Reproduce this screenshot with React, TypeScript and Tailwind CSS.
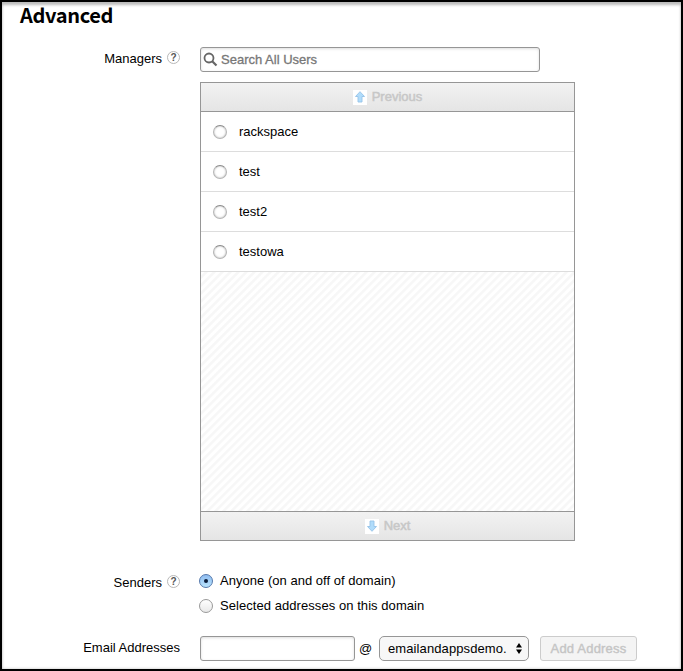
import React from 'react';

function HelpIcon() {
  return (
    <span className="mb-[3px] flex h-[13px] w-[13px] shrink-0 items-center justify-center rounded-full border border-[#b8b8b8] bg-white text-[10px] font-bold leading-none text-[#555]">
      ?
    </span>
  );
}

function Radio({ checked = false, muted = false }: { checked?: boolean; muted?: boolean }) {
  if (checked) {
    return (
      <span className="flex h-[14px] w-[14px] shrink-0 items-center justify-center rounded-full border border-[#5478ac] bg-linear-to-b from-[#8fbcf0] to-[#b9e4fd]">
        <span className="h-1 w-1 rounded-full bg-[#0a1c3a]" />
      </span>
    );
  }
  return (
    <span
      className={`h-[14px] w-[14px] shrink-0 rounded-full border ${
        muted
          ? 'border-[#999] bg-linear-to-b from-white to-[#e9e9e9]'
          : 'border-[#b5b5b5] border-t-[#8a8a8a] bg-white shadow-[inset_0_0_2px_#aaa]'
      }`}
    />
  );
}

function Arrow({ down = false }: { down?: boolean }) {
  return (
    <span className="flex h-[15px] w-[14px] items-center justify-center bg-white">
      <svg width="10" height="12" viewBox="0 0 10 12" className={down ? 'rotate-180' : ''}>
        <path d="M5 .7 9.5 5.5H7V11H3V5.5H.5Z" fill="#b0dcfb" stroke="#96c3e8" strokeWidth=".9" />
      </svg>
    </span>
  );
}

const users = ['rackspace', 'test', 'test2', 'testowa'];
const bar =
  'flex h-[28px] shrink-0 items-center justify-center gap-[5px] bg-linear-to-b from-[#f2f2f2] to-[#e5e5e5] text-[13px] text-[#c7c7c7] [-webkit-text-stroke:0.5px_#c7c7c7]';
const field =
  'h-[25px] rounded-[3px] border border-[#969696] bg-white shadow-[inset_0_1px_3px_#ddd]';

export default function App() {
  return (
    <main className="h-[671px] w-[683px] overflow-hidden border-2 border-black bg-white font-['Liberation_Sans',Arial,sans-serif] text-[13px] leading-4 text-black shadow-[inset_0_4px_3px_-1px_#bbb,inset_0_0_3px_#bbb]">
      <h1 className="h-[45px] pl-[18px] font-['Noto_Sans_CJK_SC',sans-serif] text-[20px] leading-[25px] font-bold tracking-[-0.35px]">
        Advanced
      </h1>

      <section className="flex h-[518px]">
        <div className="mt-[4px] flex h-4 w-[178px] items-center justify-end gap-[5px]">
          <span>Managers</span>
          <HelpIcon />
        </div>
        <div className="ml-[20px] w-[375px]">
          <div className={`${field} flex w-[340px] items-center pl-[2px] text-[#777] [-webkit-text-stroke:0.3px_#777]`}>
            <svg width="15" height="15" viewBox="0 0 15 15" fill="none" stroke="#666" className="mr-[3px]">
              <circle cx="6" cy="6" r="4.5" strokeWidth="1.8" />
              <path d="m9 9 4.5 4.5" strokeWidth="2.2" />
            </svg>
            <span>Search All Users</span>
          </div>
          <div className="mt-[10px] flex h-[459px] flex-col border border-[#969696]">
            <div className={bar}>
              <Arrow />
              <span>Previous</span>
            </div>
            <div className="border-t border-[#969696]">
              {users.map((u) => (
                <div key={u} className="flex h-10 items-center gap-3 border-b border-[#ddd] pl-3">
                  <Radio />
                  <span>{u}</span>
                </div>
              ))}
            </div>
            <div className="flex-1 bg-[repeating-linear-gradient(135deg,#fff_0px,#fff_2px,#f7f7f7_3px,#f7f7f7_4.66px,#fff_5.66px)]" />
            <div className={`${bar} h-[29px] border-t border-[#969696]`}>
              <Arrow down />
              <span>Next</span>
            </div>
          </div>
        </div>
      </section>

      <section className="mt-[8px] flex h-[61px]">
        <div className="mt-[2px] flex h-4 w-[178px] items-center justify-end gap-[5px]">
          <span>Senders</span>
          <HelpIcon />
        </div>
        <div className="ml-[19px] flex flex-col gap-[9px]">
          <div className="flex h-4 items-center gap-[7px]">
            <Radio checked />
            <span className="tracking-[0.03px]">Anyone (on and off of domain)</span>
          </div>
          <div className="flex h-4 items-center gap-[7px]">
            <Radio muted />
            <span className="tracking-[0.06px]">Selected addresses on this domain</span>
          </div>
        </div>
      </section>

      <section className="mt-[2px] flex h-[25px] items-center">
        <span className="mb-[2px] w-[178px] text-right">Email Addresses</span>
        <div className={`${field} ml-[20px] w-[155px]`} />
        <span className="w-6 pl-[4px]">@</span>
        <div className="flex h-[25px] w-[150px] items-center justify-between rounded-[5px] border border-[#969696] bg-[#f7f7f7] pr-[6px] pl-2">
          <span className="tracking-[0.1px]">emailandappsdemo.</span>
          <svg width="6" height="11" viewBox="0 0 6 11">
            <path d="M3 0 6 4.5H0ZM0 6.5H6L3 11Z" />
          </svg>
        </div>
        <div className="ml-[11px] flex h-[25px] w-[97px] items-center justify-center rounded-[3px] border border-[#ccc] bg-[#f4f4f4] tracking-[0.2px] text-[#c5c5c5] [-webkit-text-stroke:0.4px_#c5c5c5]">
          Add Address
        </div>
      </section>
    </main>
  );
}
